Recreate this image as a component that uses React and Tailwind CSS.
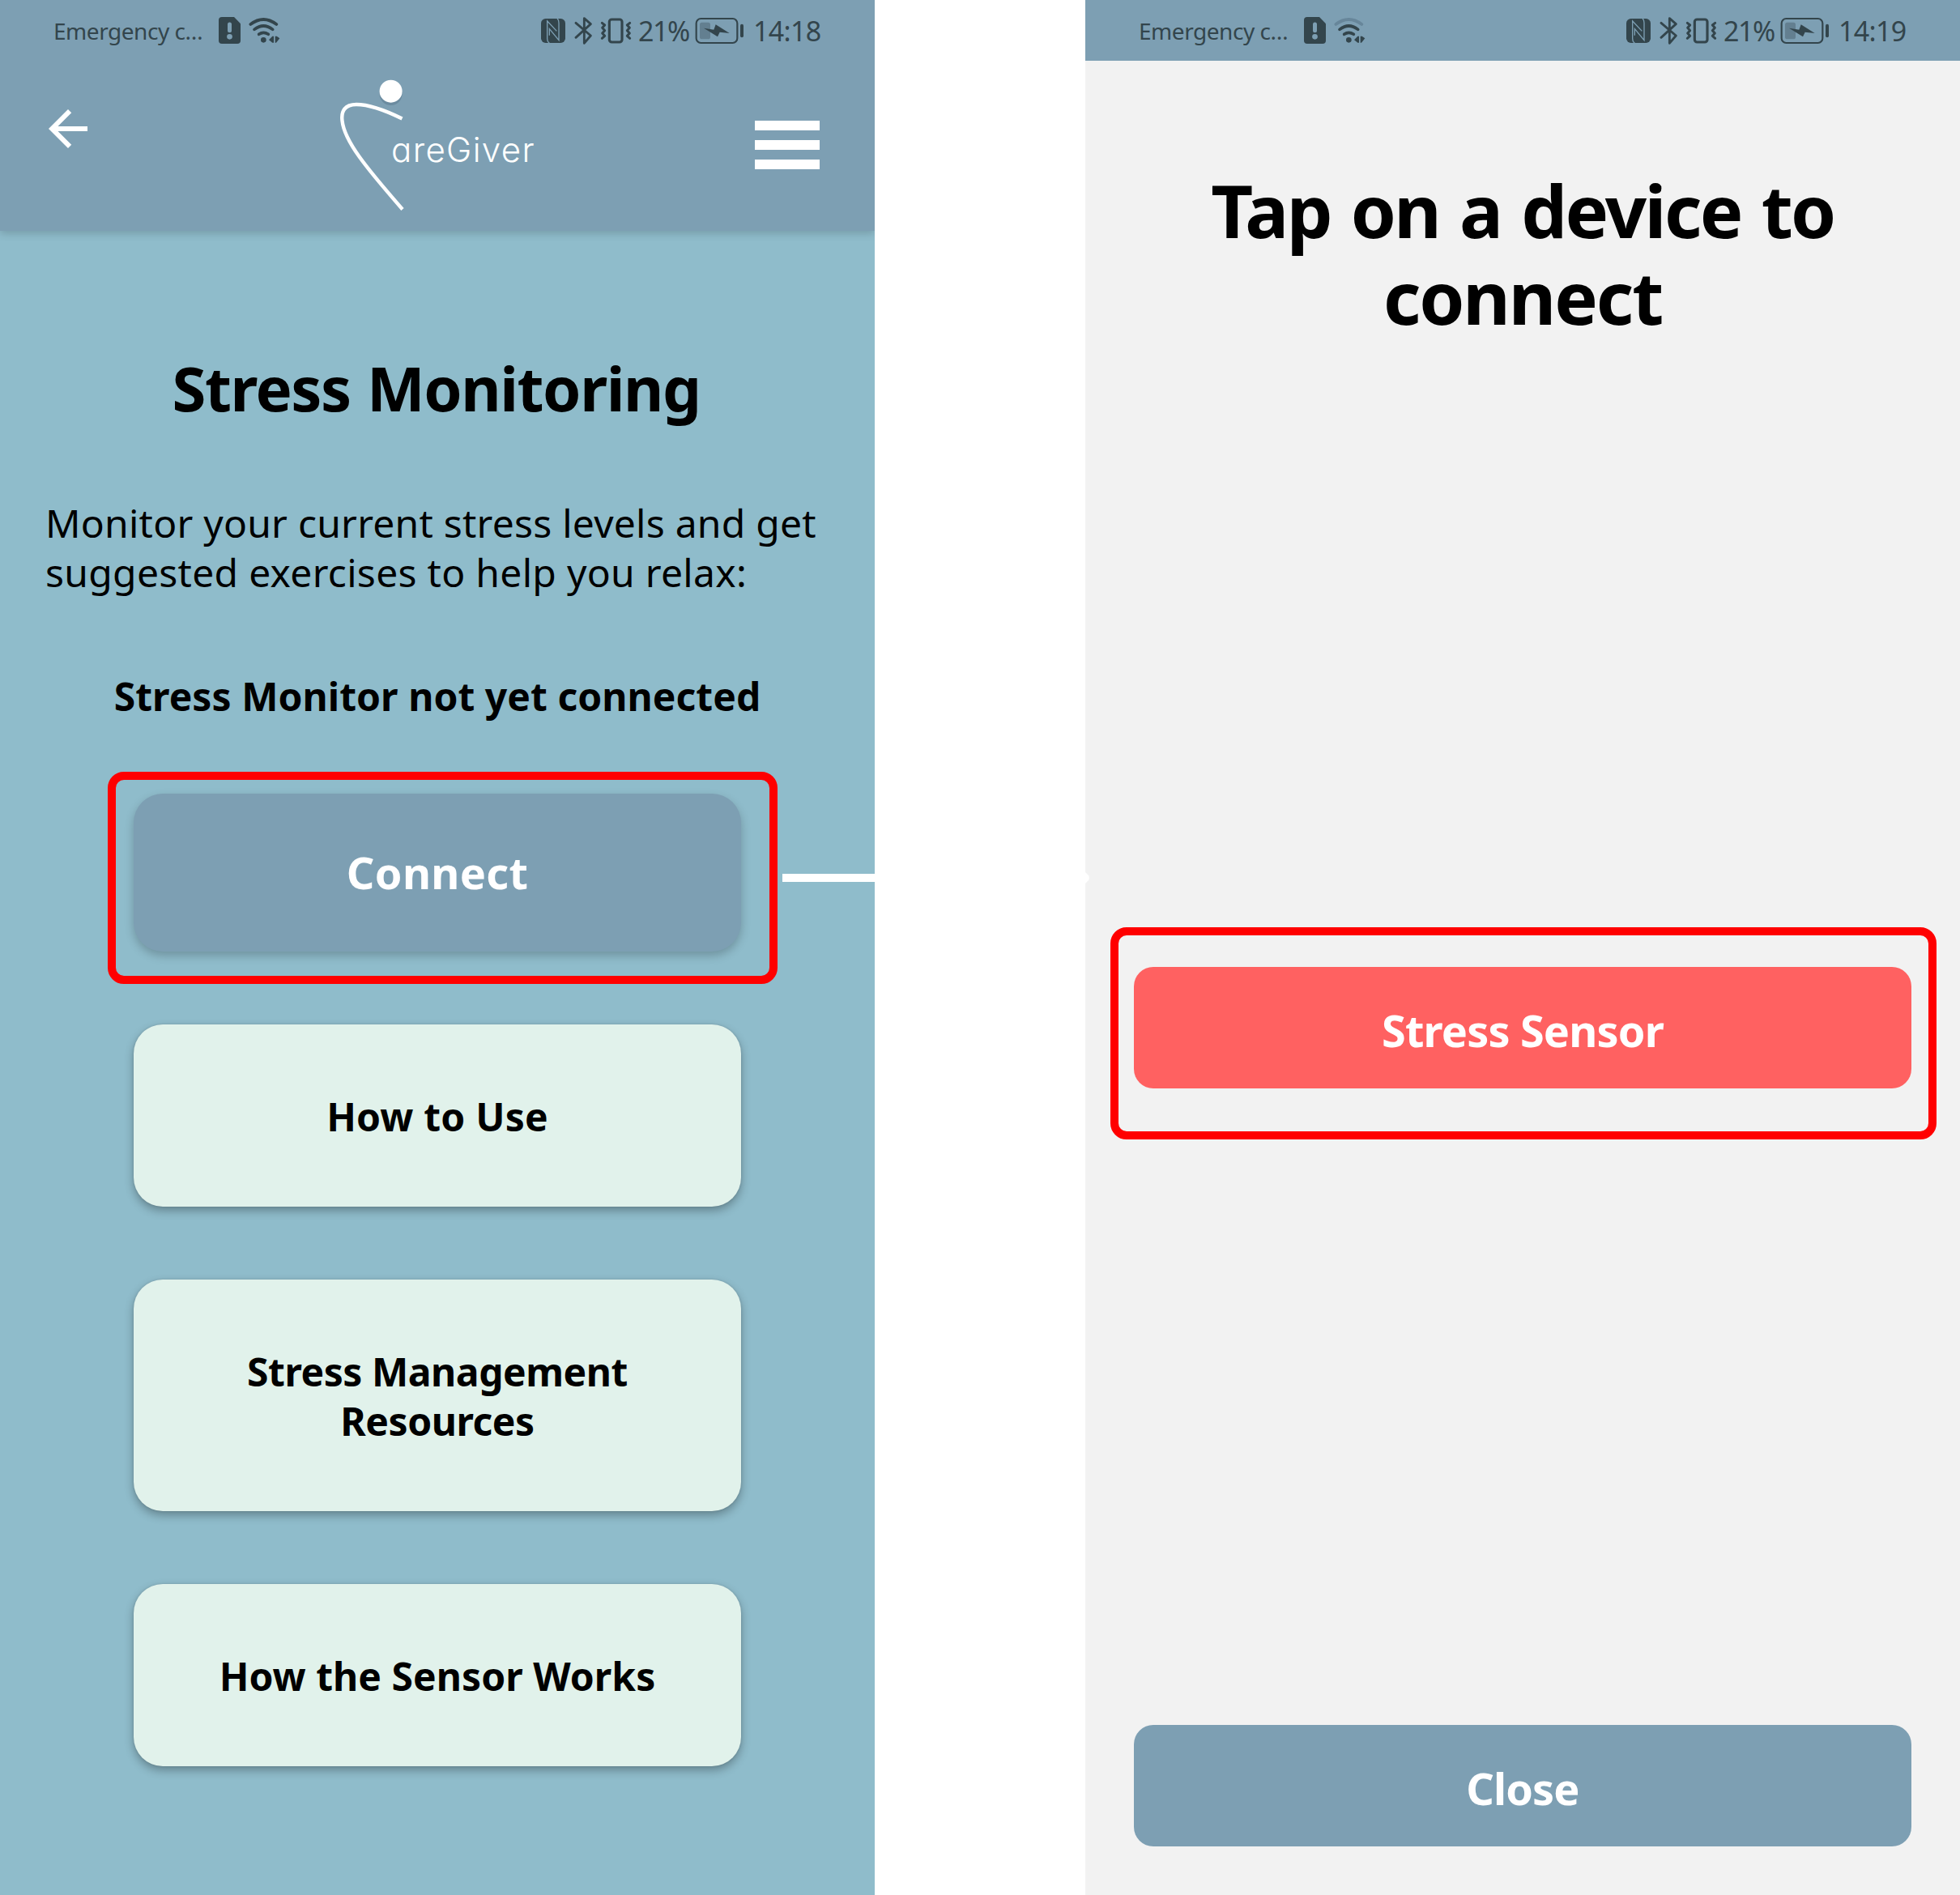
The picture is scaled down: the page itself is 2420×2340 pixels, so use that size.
import React from "react";

const INK = "#33454c";
const BAR = "#7d9fb3";

function SimIcon() {
  return (
    <svg className="ml-[12px] h-[33px] w-[27px] shrink-0" viewBox="690 63 81 99">
      <path d="M702 63H747L771 88V150Q771 162 759 162H702Q690 162 690 150V75Q690 63 702 63Z" fill={INK} />
      <path d="M730.5 90V113" stroke={BAR} strokeWidth="15" strokeLinecap="round" />
      <circle cx="730.5" cy="136" r="10" fill={BAR} />
    </svg>
  );
}

function WifiIcon({ weak }) {
  return (
    <svg className="ml-[10px] h-[33px] w-[39px] shrink-0" viewBox="800 63 117 99" fill="none" strokeWidth="11" strokeLinecap="round">
      <path d="M807 90Q855 54 903 90" stroke={weak ? "#67869a" : INK} />
      <path d="M821 109Q855 83 889 109" stroke={INK} />
      <path d="M838 127Q855 115 873 127" stroke={INK} />
      <circle cx="855" cy="148" r="10" fill={INK} />
      <path d="M875 148L888 134H893V158H888Z" fill={INK} />
      <path d="M915 142L902 158H898V134H904Z" fill={INK} />
    </svg>
  );
}

function NfcIcon() {
  return (
    <svg className="mt-px h-[30px] w-[30px] shrink-0" viewBox="55 66 90 90" fill="none">
      <rect x="55" y="66" width="90" height="90" rx="17" fill={INK} />
      <path d="M86 156Q78 152 78 140V75L113 112" stroke={BAR} strokeWidth="4" />
      <path d="M115 66Q121 70 121 82V146L86 104V128" stroke={BAR} strokeWidth="4" />
    </svg>
  );
}

function BluetoothIcon() {
  return (
    <svg className="ml-[11px] h-[34px] w-[23px] shrink-0" viewBox="177 60 69 102" fill="none" stroke={INK} strokeWidth="8.5" strokeLinecap="round" strokeLinejoin="round">
      <path d="M183 82L238 129L214 157V65L238 86L183 136" />
    </svg>
  );
}

function VibrateIcon() {
  return (
    <svg className="ml-[9px] h-[34px] w-[39px] shrink-0" viewBox="275 60 117 102" fill="none" stroke={INK} strokeLinecap="round" strokeLinejoin="round">
      <rect x="309" y="69" width="47" height="84" rx="9" strokeWidth="9.5" />
      <path d="M282 82L292 90L283 100L292 110L283 120L292 130L282 139" strokeWidth="9" />
      <path d="M385 82L375 90L384 100L375 110L384 120L375 130L385 139" strokeWidth="9" />
    </svg>
  );
}

function BatteryIcon() {
  return (
    <svg className="h-[34px] w-[61px] shrink-0" viewBox="624 62 183 102">
      <rect x="629" y="68" width="152" height="90" rx="17" fill="none" stroke={INK} strokeWidth="6.5" />
      <rect x="642" y="82" width="39" height="62" rx="8" fill="#637f90" />
      <path d="M657 103L694 109L701 90L752 122L716 118L708 135Z" fill={INK} />
      <rect x="792" y="88" width="12" height="50" rx="6" fill={INK} />
    </svg>
  );
}

function StatusBar({ time, weak }) {
  return (
    <div className="relative z-10 flex h-[75px] items-center bg-[#7d9fb3] pl-[66px] text-[#33454c]">
      <span className="w-[192px] pt-px text-[28px] tracking-[-0.46px] whitespace-nowrap">Emergency c…</span>
      <SimIcon />
      <WifiIcon weak={weak} />
      <div className="ml-auto flex w-[412px] items-center">
        <NfcIcon />
        <BluetoothIcon />
        <VibrateIcon />
        <span className="ml-[8px] w-[70px] pt-px text-[34px] tracking-[-1.4px] whitespace-nowrap">21%</span>
        <BatteryIcon />
        <span className="ml-[11px] pt-px text-[34px] tracking-[-0.7px] whitespace-nowrap">{time}</span>
      </div>
    </div>
  );
}

function Logo() {
  return (
    <div className="flex h-[180px] w-[250px] pt-[5px]">
      <svg className="h-[175px] w-[84px] shrink-0" viewBox="415 90 84 175" fill="none">
        <circle cx="482.6" cy="116" r="14" fill="#5f7f93" opacity="0.6" />
        <circle cx="482.6" cy="112.7" r="14" fill="#fff" />
        <path d="M496.500 146.500C470 133.500 452 129 440 129C426 129 421 137 422.500 149C425 174 452 207 497 258.500" stroke="#fff" strokeWidth="4.4" />
      </svg>
      <span className="-ml-[16px] mt-[69px] text-[42px] leading-[52px] font-light tracking-[1.35px] text-white font-['Inter',sans-serif] [font-feature-settings:'cv11']">
        areGiver
      </span>
    </div>
  );
}

function Header() {
  return (
    <header className="flex h-[210px] bg-[#7d9fb3] shadow-[0_3px_10px_rgba(0,0,0,0.18)]">
      <svg className="mt-[48px] ml-[48px] h-[72px] w-[72px]" viewBox="0 0 24 24" fill="#fff">
        <path d="M20 11H7.830L13.420 5.410L12 4L4 12L12 20L13.410 18.590L7.830 13H20Z" />
      </svg>
      <div className="ml-[295px] pt-[10px]">
        <Logo />
      </div>
      <div className="mt-[74px] ml-[267px] flex w-[80px] flex-col gap-[12px]">
        <span className="h-[12px] bg-white" />
        <span className="h-[12px] bg-white" />
        <span className="h-[12px] bg-white" />
      </div>
    </header>
  );
}

function Card({ className, children }) {
  return (
    <button
      className={`flex w-[750px] flex-col items-center justify-center self-center rounded-[36px] bg-[#e1f2eb] pt-[2px] text-[48px] leading-[61px] font-bold text-black shadow-[0_5px_12px_rgba(0,0,0,0.3),0_0_3px_rgba(0,0,0,0.12)] ${className}`}
    >
      {children}
    </button>
  );
}

function MonitoringScreen() {
  return (
    <section className="relative flex h-[2340px] w-[1080px] shrink-0 flex-col overflow-hidden bg-[#8fbccb] text-black">
      <StatusBar time="14:18" />
      <Header />
      <h1 className="mt-[149px] pr-[3px] text-center text-[76px] leading-[90px] font-bold tracking-[-1.45px] [word-spacing:2px]">Stress Monitoring</h1>
      <p className="mt-[91px] ml-[56px] text-[48px] leading-[61px] whitespace-nowrap">
        <span className="block tracking-[0.24px]">Monitor your current stress levels and get</span>
        <span className="block tracking-[0.3px]">suggested exercises to help you relax:</span>
      </p>
      <p className="mt-[91px] text-center text-[48px] leading-[64px] font-bold tracking-[0.05px]">Stress Monitor not yet connected</p>
      <div className="mt-[61px] ml-[133px] h-[262px] w-[827px] rounded-[20px] border-[10px] border-[#ff0000] pt-[17px] pl-[22px]">
        <button className="h-[195px] w-[750px] rounded-[36px] bg-[#7d9fb3] text-[54px] font-bold tracking-[0.3px] text-white shadow-[0_5px_12px_rgba(0,0,0,0.22)]">
          Connect
        </button>
      </div>
      <Card className="mt-[50px] h-[225px] tracking-[0.2px]">How to Use</Card>
      <Card className="mt-[90px] h-[286px] tracking-[-0.45px]">
        <span>Stress Management</span>
        <span>Resources</span>
      </Card>
      <Card className="mt-[90px] h-[225px] tracking-[0.05px]">How the Sensor Works</Card>
      <span className="absolute top-[1079px] right-0 h-[10px] w-[114px] bg-white" />
    </section>
  );
}

function DeviceScreen() {
  return (
    <section className="relative flex h-[2340px] w-[1080px] shrink-0 flex-col bg-[#f2f2f2] text-black">
      <StatusBar time="14:19" weak />
      <h2 className="mt-[131px] text-center text-[90px] leading-[107px] font-bold">
        <span className="block tracking-[-2.6px] [word-spacing:4px]">Tap on a device to</span>
        <span className="block tracking-[-2.1px]">connect</span>
      </h2>
      <div className="mt-[725px] ml-[31px] h-[262px] w-[1020px] rounded-[20px] border-[10px] border-[#ff0000] pt-[39px] pl-[19px]">
        <button className="h-[150px] w-[960px] rounded-[24px] bg-[#ff6161] pt-[6px] text-[54px] font-bold tracking-[-0.84px] text-white">
          Stress Sensor
        </button>
      </div>
      <button className="mt-[723px] ml-[60px] h-[150px] w-[960px] rounded-[24px] bg-[#7d9fb3] pt-[6px] text-[54px] font-bold tracking-[-0.9px] text-white">
        Close
      </button>
      <svg className="absolute top-[1076px] left-0 h-[16px] w-[6px]" viewBox="0 0 6 16" fill="#fff">
        <path d="M0 1L4.200 5.200Q5.500 8 4.200 10.800L0 15Z" />
      </svg>
    </section>
  );
}

export default function App() {
  return (
    <main className="flex h-[2340px] w-[2420px] gap-[260px] bg-white font-['Noto_Sans',sans-serif]">
      <MonitoringScreen />
      <DeviceScreen />
    </main>
  );
}
